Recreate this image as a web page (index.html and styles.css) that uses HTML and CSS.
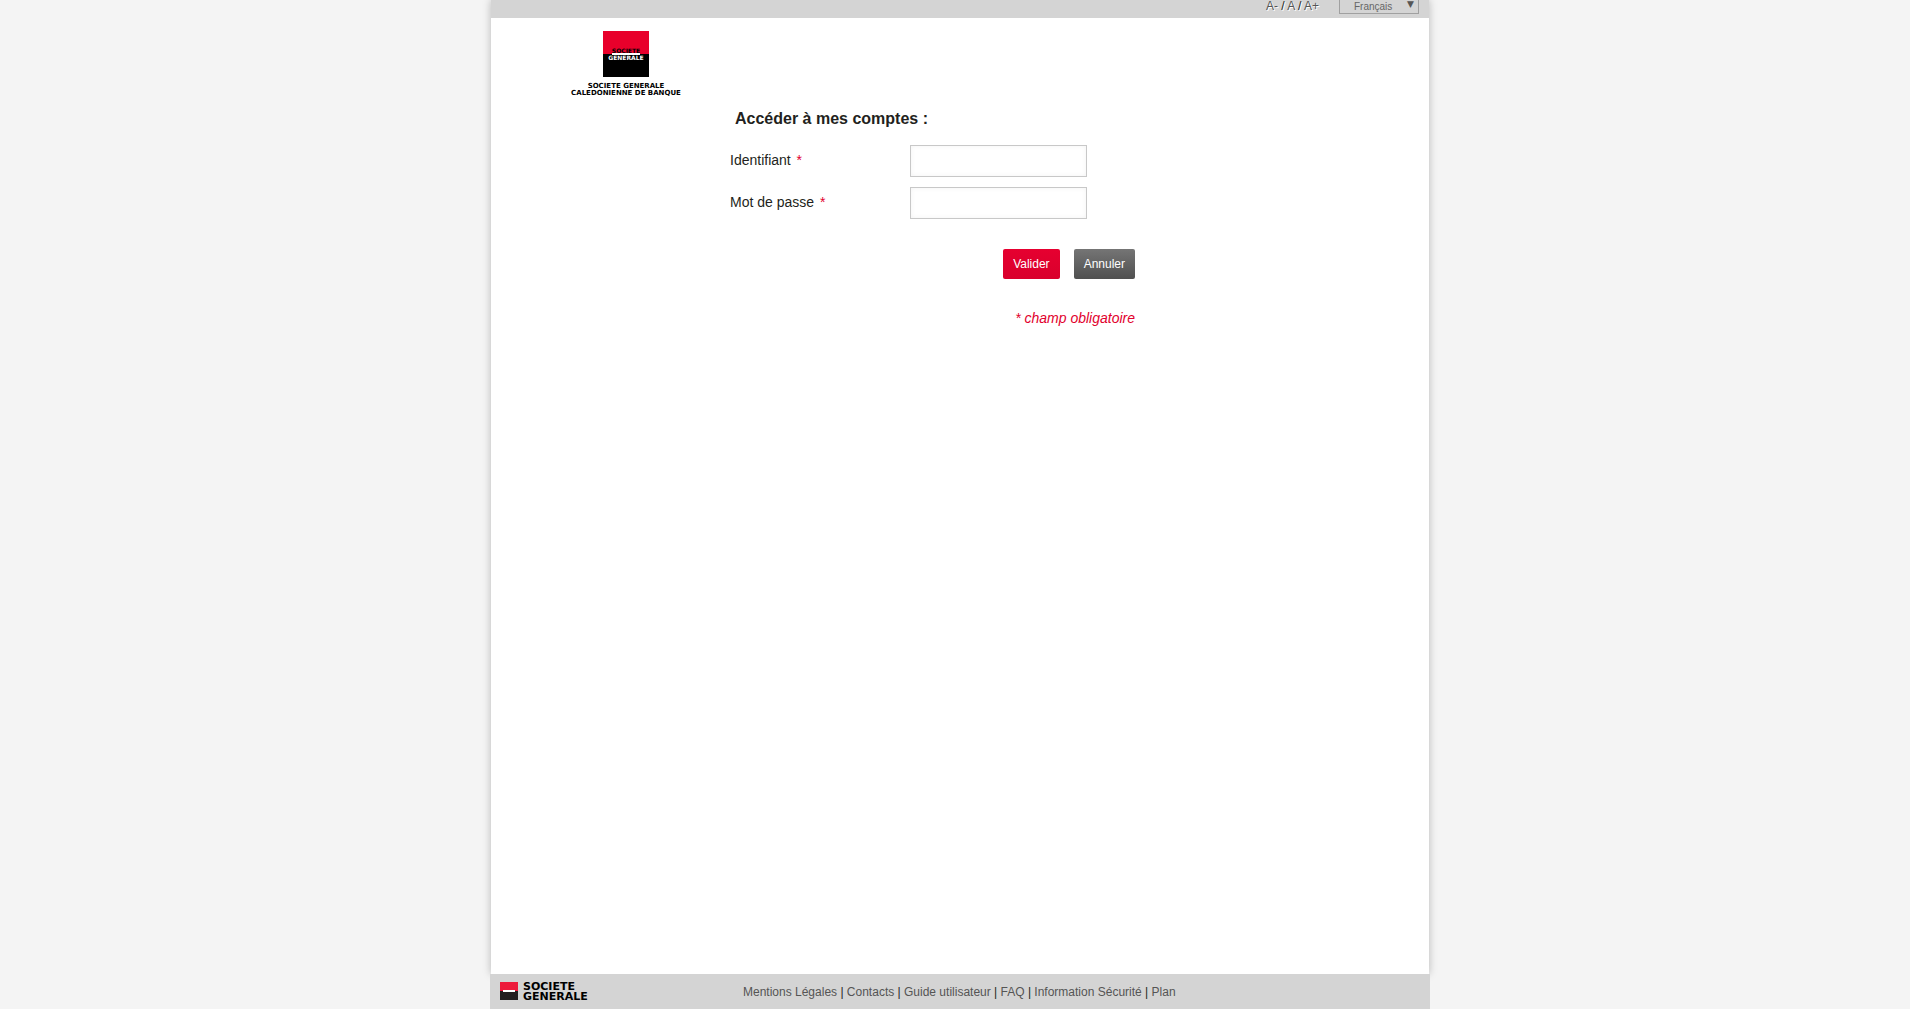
FILE: index.html
```html
<!DOCTYPE html>
<html lang="fr">
<head>
<meta charset="utf-8">
<meta name="viewport" content="width=device-width, initial-scale=1">
<title>Accéder à mes comptes</title>
<link rel="stylesheet" href="styles.css">
</head>
<body>
<div class="page">
  <header class="topbar">
    <div class="text-size">
      <a href="#">A-</a> <span class="slash">/</span> <a href="#">A</a> <span class="slash">/</span> <a href="#">A+</a>
    </div>
    <div class="language">
      <select class="language-select" aria-label="Langue">
        <option>Français</option>
      </select>
      <span class="language-arrow" aria-hidden="true">▼</span>
    </div>
  </header>
  <main class="content">
    <svg class="logo" viewBox="0 0 120 68" width="120" height="68" role="img" aria-label="Société Générale Calédonienne de Banque">
      <rect x="37" y="1" width="46" height="23" fill="#e8002b"/>
      <rect x="37" y="24" width="46" height="23" fill="#000"/>
      <rect x="46" y="23" width="28" height="2" fill="#fff"/>
      <text class="logo-text logo-small" x="60" y="23">SOCIETE</text>
      <text class="logo-text logo-small logo-white" x="60" y="30">GENERALE</text>
      <text class="logo-text" x="60" y="58">SOCIETE GENERALE</text>
      <text class="logo-text" x="60" y="65">CALEDONIENNE DE BANQUE</text>
    </svg>
    <form class="login">
      <h1 class="login-title">Accéder à mes comptes :</h1>
      <div class="field">
        <label for="identifiant">Identifiant <span class="required">*</span></label>
        <input id="identifiant" class="field-input" type="text">
      </div>
      <div class="field">
        <label for="password">Mot de passe <span class="required">*</span></label>
        <input id="password" class="field-input" type="password">
      </div>
      <div class="actions">
        <button class="button button-primary" type="submit">Valider</button>
        <button class="button" type="reset">Annuler</button>
      </div>
      <p class="note">* champ obligatoire</p>
    </form>
  </main>
</div>
<footer class="footer">
  <svg class="footer-logo" viewBox="0 -4 96 28" width="96" height="28" role="img" aria-label="Société Générale">
    <rect x="0" y="0" width="18" height="10" fill="#ed1a3b"/>
    <rect x="0" y="9" width="18" height="9" fill="#231f20"/>
    <rect x="3" y="8" width="12" height="2" fill="#fff"/>
    <text class="footer-logo-text" x="23" y="8">SOCIETE</text>
    <text class="footer-logo-text" x="23" y="18">GENERALE</text>
  </svg>
  <nav class="footer-links">
    <a href="#">Mentions Légales</a> | <a href="#">Contacts</a> | <a href="#">Guide utilisateur</a> | <a href="#">FAQ</a> | <a href="#">Information Sécurité</a> | <a href="#">Plan</a>
  </nav>
</footer>
</body>
</html>
```
FILE: styles.css
```css
* {
  box-sizing: border-box;
}

body {
  margin: 0;
  padding-left: 10px;
  min-height: 100vh;
  display: flex;
  flex-direction: column;
  align-items: center;
  background: #f4f4f4;
  color: #231f20;
  font-family: "Liberation Sans", Arial, sans-serif;
  font-size: 14px;
}

a {
  color: #555;
  text-decoration: none;
}

.page {
  width: 100%;
  max-width: 938px;
  flex: 1;
  background: #fff;
  box-shadow: 0 0 8px rgba(0, 0, 0, 0.25);
}

.topbar {
  height: 18px;
  padding: 0 10px 4px;
  display: flex;
  justify-content: flex-end;
  align-items: flex-end;
  gap: 20px;
  background: #d4d4d4;
}

.text-size {
  font-size: 12px;
  line-height: 16px;
  text-shadow: 1px 1px 0 #fff;
}

.slash {
  color: #231f20;
}

.language {
  position: relative;
  display: flex;
}

.language-select {
  width: 80px;
  height: 20px;
  padding: 4px 14px 0;
  appearance: none;
  border: 1px solid #a0a0a0;
  border-radius: 0;
  background: transparent;
  color: #666;
  font-family: inherit;
  font-size: 10px;
}

.language-arrow {
  position: absolute;
  right: 5px;
  bottom: 4px;
  color: #555;
  font-family: "DejaVu Sans", sans-serif;
  font-size: 9px;
  line-height: 12px;
  pointer-events: none;
}

.content {
  padding: 12px 16px 40px 75px;
}

.logo {
  display: block;
}

.logo-text {
  font-family: "DejaVu Sans", sans-serif;
  font-size: 7px;
  font-weight: bold;
  text-anchor: middle;
}

.logo-small {
  font-size: 6px;
}

.logo-white {
  fill: #fff;
}

.login {
  max-width: 405px;
  margin: 10px 0 0 164px;
}

.login-title {
  margin: 0 0 16px 5px;
  font-size: 16px;
  line-height: 21px;
}

.field {
  display: flex;
  align-items: flex-start;
  margin-bottom: 10px;
}

.field label {
  width: 180px;
  line-height: 30px;
}

.required {
  margin-left: 2px;
  color: #e2002d;
}

.field-input {
  width: 177px;
  height: 32px;
  padding: 4px 8px;
  border: 1px solid #c8c8c8;
  background: #fff;
  box-shadow: inset 0 0 5px rgba(0, 0, 0, 0.05);
  font: inherit;
}

.actions {
  display: flex;
  justify-content: flex-end;
  gap: 14px;
  margin-top: 30px;
}

.button {
  height: 30px;
  padding: 0 10px;
  border: 0;
  border-radius: 2px;
  background: linear-gradient(#757575, #505050);
  color: #fff;
  font-family: inherit;
  font-size: 12px;
}

.button-primary {
  background: linear-gradient(#e60030, #d9002c);
}

.note {
  margin: 29px 0 0;
  color: #e2002d;
  font-style: italic;
  line-height: 20px;
  text-align: right;
}

.footer {
  position: relative;
  width: 100%;
  max-width: 940px;
  min-height: 35px;
  padding: 0 10px;
  display: flex;
  align-items: center;
  gap: 147px;
  background: #d4d4d4;
}

.footer-logo {
  flex: none;
}

.footer-logo-text {
  font-family: "DejaVu Sans", sans-serif;
  font-size: 11px;
  font-weight: bold;
}

.footer-links {
  font-size: 12px;
}
```
